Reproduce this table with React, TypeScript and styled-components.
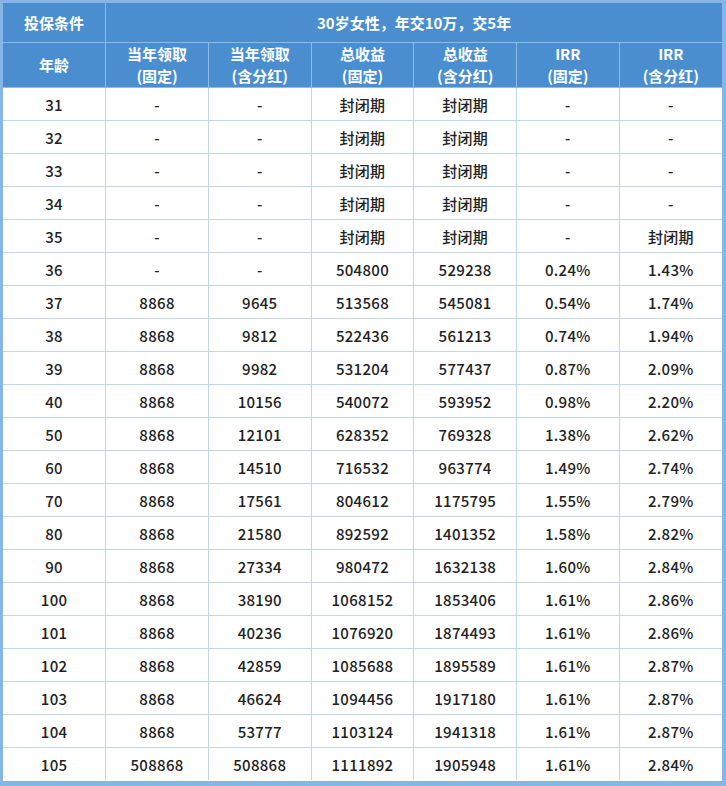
import styled, { createGlobalStyle } from "styled-components";

const GlobalStyle = createGlobalStyle`
  html, body {
    margin: 0;
    padding: 0;
    background: #ffffff;
  }
  body {
    font-family: "Noto Sans CJK SC", "Noto Sans", sans-serif;
  }
`;

const Frame = styled.div`
  width: 726px;
  height: 786px;
  box-sizing: border-box;
  border: 3px solid #86b6e6;
  border-bottom-width: 5px;
  border-right-width: 4px;
  background: #ffffff;
  overflow: hidden;
`;

const Table = styled.table`
  width: 100%;
  border-collapse: collapse;
  table-layout: fixed;
`;

const HeadCell = styled.th<{ $tall?: boolean }>`
  height: ${({ $tall }) => ($tall ? "44px" : "39px")};
  padding: 0;
  background: #4a8ed0;
  color: #ffffff;
  font-size: 15px;
  font-weight: 700;
  line-height: 22px;
  text-align: center;
  border: 1px solid #8dbbe6;
  border-top: none;
  &:first-child {
    border-left: none;
  }
  &:last-child {
    border-right: none;
  }
`;

const Cell = styled.td`
  height: 32px;
  padding: 0;
  color: #222222;
  font-size: 15px;
  font-weight: 500;
  letter-spacing: 0.3px;
  text-align: center;
  border: 1px solid #c3d6e3;
  &:first-child {
    border-left: none;
  }
  &:last-child {
    border-right: none;
  }
`;

const Row = styled.tr`
  &:last-child td {
    border-bottom: none;
  }
`;

const subHeads = [
  ["当年领取", "(固定)"],
  ["当年领取", "(含分红)"],
  ["总收益", "(固定)"],
  ["总收益", "(含分红)"],
  ["IRR", "(固定)"],
  ["IRR", "(含分红)"],
];

const rows: string[][] = [
  ["31", "-", "-", "封闭期", "封闭期", "-", "-"],
  ["32", "-", "-", "封闭期", "封闭期", "-", "-"],
  ["33", "-", "-", "封闭期", "封闭期", "-", "-"],
  ["34", "-", "-", "封闭期", "封闭期", "-", "-"],
  ["35", "-", "-", "封闭期", "封闭期", "-", "封闭期"],
  ["36", "-", "-", "504800", "529238", "0.24%", "1.43%"],
  ["37", "8868", "9645", "513568", "545081", "0.54%", "1.74%"],
  ["38", "8868", "9812", "522436", "561213", "0.74%", "1.94%"],
  ["39", "8868", "9982", "531204", "577437", "0.87%", "2.09%"],
  ["40", "8868", "10156", "540072", "593952", "0.98%", "2.20%"],
  ["50", "8868", "12101", "628352", "769328", "1.38%", "2.62%"],
  ["60", "8868", "14510", "716532", "963774", "1.49%", "2.74%"],
  ["70", "8868", "17561", "804612", "1175795", "1.55%", "2.79%"],
  ["80", "8868", "21580", "892592", "1401352", "1.58%", "2.82%"],
  ["90", "8868", "27334", "980472", "1632138", "1.60%", "2.84%"],
  ["100", "8868", "38190", "1068152", "1853406", "1.61%", "2.86%"],
  ["101", "8868", "40236", "1076920", "1874493", "1.61%", "2.86%"],
  ["102", "8868", "42859", "1085688", "1895589", "1.61%", "2.87%"],
  ["103", "8868", "46624", "1094456", "1917180", "1.61%", "2.87%"],
  ["104", "8868", "53777", "1103124", "1941318", "1.61%", "2.87%"],
  ["105", "508868", "508868", "1111892", "1905948", "1.61%", "2.84%"],
];

export default function App() {
  return (
    <>
      <GlobalStyle />
      <Frame>
        <Table>
          <thead>
            <tr>
              <HeadCell>投保条件</HeadCell>
              <HeadCell colSpan={6}>30岁女性，年交10万，交5年</HeadCell>
            </tr>
            <tr>
              <HeadCell $tall>年龄</HeadCell>
              {subHeads.map(([top, bottom], i) => (
                <HeadCell $tall key={i}>
                  {top}
                  <br />
                  {bottom}
                </HeadCell>
              ))}
            </tr>
          </thead>
          <tbody>
            {rows.map((row) => (
              <Row key={row[0]}>
                {row.map((value, i) => (
                  <Cell key={i}>{value}</Cell>
                ))}
              </Row>
            ))}
          </tbody>
        </Table>
      </Frame>
    </>
  );
}
